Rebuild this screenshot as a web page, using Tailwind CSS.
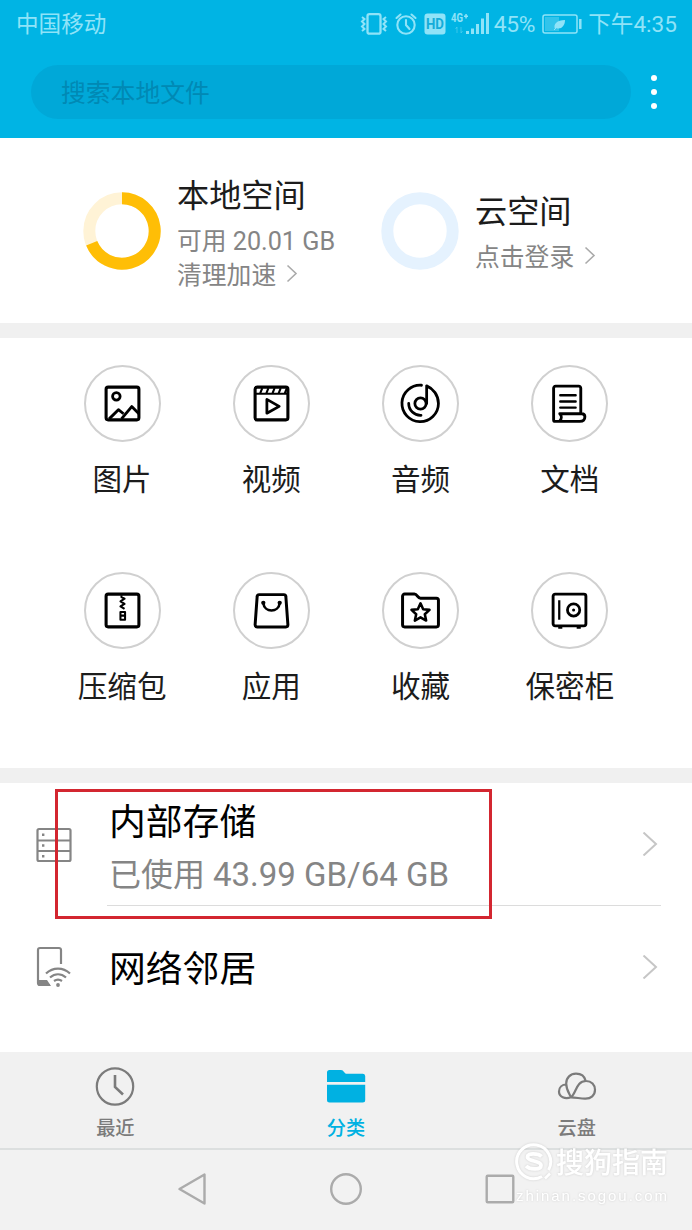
<!DOCTYPE html>
<html lang="zh-CN">
<head>
<meta charset="utf-8">
<title>文件管理</title>
<script src="https://cdn.jsdelivr.net/npm/@tailwindcss/browser@4"></script>
</head>
<body class="bg-white">
<div class="relative flex h-[1230px] w-[692px] flex-col overflow-hidden bg-white font-['Roboto','Noto_Sans_CJK_SC',sans-serif] text-[#1c1c1c]">

  <header class="h-[138px] bg-[#00b4e4]">
    <div class="flex h-12 items-center justify-between pl-4 pr-[15px] text-[22.6px] leading-none text-[#8fe3f8]">
      <span class="pt-[3px]">中国移动</span>
      <div class="flex items-center">
        <svg class="mr-[7px] h-6 w-[28px]" viewBox="0 0 28 24" fill="none" stroke="currentColor" stroke-width="2.300"><rect x="7.500" y="2.200" width="13" height="19.500" rx="2"/><path d="M2 5l2.500 2-2.500 2.500 2.500 2.500-2.500 2.500 2.500 2.500-2.500 2M26 5l-2.500 2 2.500 2.500-2.500 2.500 2.500 2.500-2.500 2.500 2.500 2" stroke-width="2"/></svg>
        <svg class="mr-[7px] h-6 w-[22px]" viewBox="0 0 22 24" fill="none" stroke="currentColor" stroke-width="2.100" stroke-linecap="round"><circle cx="11" cy="13" r="8.700"/><path d="M11 8v5l3.500 4M1.500 6L5.500 2.500M20.500 6l-4-3.500"/></svg>
        <svg class="mr-[5px] h-6 w-[22px]" viewBox="0 0 22 24"><rect x="0.500" y="1.500" width="21" height="21" rx="3" fill="currentColor"/><text x="11" y="17.300" text-anchor="middle" textLength="18" lengthAdjust="spacingAndGlyphs" font-size="14.500" font-weight="700" fill="#14acd9">HD</text></svg>
        <svg class="mr-[5px] h-6 w-[38px]" viewBox="0 0 38 24" fill="currentColor"><text x="0" y="10" font-size="12" font-weight="700" textLength="12" lengthAdjust="spacingAndGlyphs">4G</text><path d="M13 3.500h4v1.500h-4zM14.300 2h1.500v4.500h-1.500z"/><path d="M6 15v6M4.500 17L6 15M10 15v6M11.500 19L10 21" stroke="currentColor" stroke-opacity=".4"/><path d="M15 19h3v3h-3zM20 16.500h3V22h-3zM25 12h3v10h-3zM30 6.500h3V22h-3zM35 1h3v21h-3z"/></svg>
        <span class="mr-[7px] pt-[2px] text-[22.8px] tracking-[-0.3px]">45%</span>
        <svg class="mr-[6px] h-6 w-[40px]" viewBox="0 0 40 24" fill="none" stroke="currentColor"><rect x="1" y="3" width="34" height="18" rx="2" stroke-width="1.500"/><rect x="3" y="5" width="14" height="14" fill="currentColor" fill-opacity=".35" stroke="none"/><path d="M13 17c-2-5 2-9 10-9 0 6-4 10-9 8z" fill="currentColor" stroke="none"/><path d="M12 18l6-6" /><path d="M38.300 7v10" stroke-width="2.500"/></svg>
        <span class="pt-[3px]">下午4:35</span>
      </div>
    </div>
    <div class="flex pl-[31px] pt-[17px]">
      <div class="flex h-[54px] w-[600px] items-center rounded-full bg-[#00a8d8] pl-[30px] pt-1 text-[24.8px] leading-none text-[#0089b4]">搜索本地文件</div>
      <div class="ml-[19.500px] flex flex-col justify-center gap-2">
        <i class="size-[6px] rounded-full bg-white"></i>
        <i class="size-[6px] rounded-full bg-white"></i>
        <i class="size-[6px] rounded-full bg-white"></i>
      </div>
    </div>
  </header>

  <section class="flex h-[185px] pl-[83px]">
    <div class="flex w-[298px] items-center">
      <svg class="size-[78px]" viewBox="0 0 78 78" fill="none" stroke-width="12"><circle cx="39" cy="39" r="32.700" stroke="#fff3d6"/><path d="M39 6.300A32.700 32.700 0 1 1 8.700 51.300" stroke="#ffbe06"/></svg>
      <div class="ml-4 flex flex-col pt-[5px]">
        <h2 class="text-[32.2px] leading-[44px]">本地空间</h2>
        <p class="mt-[7px] text-[24.8px] leading-[34px] text-[#858585]">可用 <span class="text-[25.2px]">20.01 GB</span></p>
        <p class="flex items-center text-[24.8px] leading-[34px] text-[#858585]">清理加速<svg class="ml-[10px] h-5 w-3 -translate-y-[2px]" viewBox="0 0 12 20" fill="none" stroke="#aaa" stroke-width="1.600"><path d="M1.500 1.500l8.500 8-8.500 8"/></svg></p>
      </div>
    </div>
    <div class="flex items-center">
      <svg class="size-[78px]" viewBox="0 0 78 78" fill="none"><circle cx="39" cy="39" r="32.700" stroke="#e5f2fe" stroke-width="12"/></svg>
      <div class="ml-4 flex flex-col pt-1">
        <h2 class="text-[32.2px] leading-[44px]">云空间</h2>
        <p class="mt-[7px] flex items-center text-[24.8px] leading-[34px] text-[#858585]">点击登录<svg class="ml-[10px] h-5 w-3 -translate-y-[2px]" viewBox="0 0 12 20" fill="none" stroke="#aaa" stroke-width="1.600"><path d="M1.500 1.500l8.500 8-8.500 8"/></svg></p>
      </div>
    </div>
  </section>

  <div class="h-[15px] bg-[#f0f0f0]"></div>

  <section class="grid h-[430px] grid-cols-4 grid-rows-[207px_207px] px-[47.5px] pt-[27px] text-[29.6px] leading-[40px]">
    <div class="flex flex-col items-center whitespace-nowrap">
      <div class="flex size-[77px] items-center justify-center rounded-full border-2 border-[#d0d0d0]">
        <svg class="size-[41px]" viewBox="0 0 40 40" fill="none" stroke="#000" stroke-width="3" stroke-linejoin="round"><rect x="4" y="4" width="32" height="32" rx="2"/><circle cx="14" cy="13" r="3.700" stroke-width="2.700"/><path d="M7 35l9-9 5 4M19 35l10-12 7 7" stroke-width="2.800"/></svg>
      </div>
      <span class="mt-[18px]">图片</span>
    </div>
    <div class="flex flex-col items-center whitespace-nowrap">
      <div class="flex size-[77px] items-center justify-center rounded-full border-2 border-[#d0d0d0]">
        <svg class="size-[41px]" viewBox="0 0 40 40" fill="none" stroke="#000" stroke-width="3" stroke-linejoin="round"><rect x="4" y="4" width="32" height="32" rx="2"/><path d="M4 10.500h32" stroke-width="2"/><path d="M9 10l2-5M15 10l2-5M21 10l2-5M27 10l2-5M33 10l2-5" stroke-width="2"/><path d="M15.500 16v13.500l12-6.700z" stroke-width="2.700"/></svg>
      </div>
      <span class="mt-[18px]">视频</span>
    </div>
    <div class="flex flex-col items-center whitespace-nowrap">
      <div class="flex size-[77px] items-center justify-center rounded-full border-2 border-[#d0d0d0]">
        <svg class="size-[41px]" viewBox="0 0 40 40" fill="none" stroke="#000" stroke-width="2.700" stroke-linecap="round" stroke-linejoin="round"><path d="M21 2.200A17.800 17.800 0 1 0 37.500 20C37.500 12 32.500 5.500 26 2.800V20"/><circle cx="20" cy="20" r="5.500"/><path d="M8.500 20A11.500 11.500 0 0 0 20.500 31.500"/></svg>
      </div>
      <span class="mt-[18px]">音频</span>
    </div>
    <div class="flex flex-col items-center whitespace-nowrap">
      <div class="flex size-[77px] items-center justify-center rounded-full border-2 border-[#d0d0d0]">
        <svg class="size-[41px]" viewBox="0 0 40 40" fill="none" stroke="#000" stroke-width="2.800" stroke-linecap="round" stroke-linejoin="round"><path d="M31 29V5a2 2 0 0 0-2-2H6.500a2 2 0 0 0-2 2v31a1.500 1.500 0 0 0 1.500 1.500H30c3.500 0 5-2 5-4.500s-1-3-3-3H10.500c2 2 2 5 0 7"/><path d="M11 12h15M11 18h15M11 24h15" stroke-width="2.300"/></svg>
      </div>
      <span class="mt-[18px]">文档</span>
    </div>
    <div class="flex flex-col items-center whitespace-nowrap">
      <div class="flex size-[77px] items-center justify-center rounded-full border-2 border-[#d0d0d0]">
        <svg class="size-[41px]" viewBox="0 0 40 40" fill="none" stroke="#000" stroke-width="3" stroke-linejoin="round"><rect x="4" y="4" width="32" height="32" rx="2"/><path d="M19 5v2l3 1.500-4 2.500 4 2.500-4 2.500 4 2.500M18 21.500h4.500v7.500H18zM18 25h4" stroke-width="2"/></svg>
      </div>
      <span class="mt-[18px]">压缩包</span>
    </div>
    <div class="flex flex-col items-center whitespace-nowrap">
      <div class="flex size-[77px] items-center justify-center rounded-full border-2 border-[#d0d0d0]">
        <svg class="size-[41px]" viewBox="0 0 40 40" fill="none" stroke="#000" stroke-width="2.900" stroke-linejoin="round"><path d="M8 4.500h24a2 2 0 0 1 2 2l2 27.500a2 2 0 0 1-2 2H6a2 2 0 0 1-2-2L6 6.500a2 2 0 0 1 2-2z"/><path d="M12 12.500c1 10 15 10 16 0" stroke-width="2.600"/><circle cx="12" cy="12.500" r="2.100" fill="#000" stroke="none"/><circle cx="28" cy="12.500" r="2.100" fill="#000" stroke="none"/></svg>
      </div>
      <span class="mt-[18px]">应用</span>
    </div>
    <div class="flex flex-col items-center whitespace-nowrap">
      <div class="flex size-[77px] items-center justify-center rounded-full border-2 border-[#d0d0d0]">
        <svg class="size-[41px]" viewBox="0 0 40 40" fill="none" stroke="#000" stroke-width="2.900" stroke-linejoin="round"><path d="M4.500 4H14c3 0 3 4 6 4h15.500a2 2 0 0 1 2 2v24a2 2 0 0 1-2 2h-31a2 2 0 0 1-2-2V6a2 2 0 0 1 2-2z"/><path d="M20 13l2.600 5.700 6.200.7-4.600 4.200 1.300 6.200-5.500-3.100-5.500 3.100 1.300-6.200-4.600-4.200 6.200-.7z" stroke-width="2.500"/></svg>
      </div>
      <span class="mt-[18px]">收藏</span>
    </div>
    <div class="flex flex-col items-center whitespace-nowrap">
      <div class="flex size-[77px] items-center justify-center rounded-full border-2 border-[#d0d0d0]">
        <svg class="size-[41px]" viewBox="0 0 40 40" fill="none" stroke="#000" stroke-width="2.800" stroke-linejoin="round"><rect x="4" y="4" width="32" height="31" rx="2"/><path d="M10 10v19" stroke-width="2.200"/><circle cx="24" cy="19.500" r="6" stroke-width="2.700"/><circle cx="24" cy="19.500" r="1.500" fill="#000" stroke="none"/><path d="M9 36.500h4M27 36.500h4" /></svg>
      </div>
      <span class="mt-[18px]">保密柜</span>
    </div>
  </section>

  <div class="h-[15px] bg-[#f0f0f0]"></div>

  <section class="h-[269px] pl-[34px] pr-[31px] text-black">
    <div class="flex h-[123px]">
      <div class="flex w-[73px] items-center">
        <svg class="size-10" viewBox="0 0 40 40" fill="none" stroke="#858585" stroke-width="2.200"><rect x="3.500" y="4" width="33" height="32" rx="1.500"/><path d="M3 15.500h34M3 26h34"/><path d="M8 9.800h2.400M8 20.500h2.400M8 31.300h2.400" stroke-width="2.400"/></svg>
      </div>
      <div class="flex grow justify-between border-b border-[#dcdcdc] pl-[2px]">
        <div class="flex flex-col">
          <h3 class="mt-[15px] text-[36.8px] leading-[50px]">内部存储</h3>
          <p class="mt-[2px] text-[32px] leading-[50px] text-[#858585]">已使用 <span class="text-[33px]">43.99 GB/64 GB</span></p>
        </div>
        <svg class="mr-[3px] h-6 w-4 self-center" viewBox="0 0 16 24" fill="none" stroke="#c6c6c6" stroke-width="2"><path d="M1.500 .5L14 12 1.500 23.500"/></svg>
      </div>
    </div>
    <div class="flex h-[122px] items-center">
      <div class="flex w-[75px] items-center">
        <svg class="h-[42px] w-10" viewBox="0 0 40 42" fill="none" stroke="#858585" stroke-width="2.200"><path d="M27 18V4a2 2 0 0 0-2-2H6a2 2 0 0 0-2 2v33a2 2 0 0 0 2 2h10"/><path d="M4 34h9l4 6H6a2 2 0 0 1-2-2z" fill="#858585" stroke="none"/><path d="M12 27.500c7-6.500 17-6.500 24 0M16 31.500c5-4.300 11-4.300 16 0M20 35c3-2 5-2 8 0"/><circle cx="24" cy="39" r="1.900" fill="#858585" stroke="none"/></svg>
      </div>
      <h3 class="grow pt-[5px] text-[36.8px] leading-[50px]">网络邻居</h3>
      <svg class="mr-[3px] h-6 w-4" viewBox="0 0 16 24" fill="none" stroke="#c6c6c6" stroke-width="2"><path d="M1.500 .5L14 12 1.500 23.500"/></svg>
    </div>
  </section>

  <nav class="grid h-[98px] grid-cols-3 border-b-2 border-[#dcdfdf] bg-[#f1f1f1] pt-[14px] text-[19.2px] font-medium leading-[26px] text-[#7b7b7b]">
    <div class="flex flex-col items-center">
      <svg class="size-10" viewBox="0 0 40 40" fill="none" stroke="currentColor" stroke-width="2.200"><circle cx="20" cy="20.500" r="18.200"/><path d="M20 9v12l8 7.500" stroke-width="2.600"/></svg>
      <span class="mt-[10px]">最近</span>
    </div>
    <div class="flex flex-col items-center text-[#00b1e2]">
      <svg class="size-10" viewBox="0 0 40 40" fill="currentColor"><path d="M1 16V6.500a2.500 2.500 0 0 1 2.500-2.500H15c3 0 3 3.800 6 3.800h15.700A2.500 2.500 0 0 1 39.200 10v6zM1 18.700h38.200V34a2.500 2.500 0 0 1-2.500 2.500H3.500A2.500 2.500 0 0 1 1 34z"/></svg>
      <span class="mt-[10px]">分类</span>
    </div>
    <div class="flex flex-col items-center">
      <svg class="size-10" viewBox="0 0 40 40" fill="none" stroke="currentColor" stroke-width="2.200" stroke-linejoin="round"><path d="M14 31.300C12 27 9.200 24 9.200 17.500 9.200 11.500 13.500 7.700 19 7.700c5 0 8.700 3 9.700 7.300M14 31.300C19.500 27 19 15 29 15c5.500 0 9 3.800 9 8.800 0 5.500-4 9-10 8.800C23.500 32.500 19 31.500 14 31.300zM9.500 18.500C5 18.500 2 21.500 2 25.500c0 5.500 6 8 12 5.800"/></svg>
      <span class="mt-[10px]">云盘</span>
    </div>
  </nav>

  <footer class="flex h-[80px] items-center bg-[#f2f2f2] pb-[2px] pl-[176px]">
    <svg class="h-9 w-8" viewBox="0 0 32 36" fill="none" stroke="#ababab" stroke-width="2.400" stroke-linejoin="round"><path d="M28.500 3.500v29L3.500 18z"/></svg>
    <svg class="ml-[120px] size-9" viewBox="0 0 36 36" fill="none" stroke="#ababab" stroke-width="2.400"><circle cx="18" cy="18" r="14.800"/></svg>
    <svg class="ml-[118px] size-9" viewBox="0 0 36 36" fill="none" stroke="#ababab" stroke-width="2.400"><rect x="4.700" y="4.700" width="26.600" height="26.600" rx="1"/></svg>
  </footer>

  <div class="absolute left-[55px] top-[789px] h-[130px] w-[437px] border-[3px] border-[#d32630]"></div>

  <div class="absolute left-[514px] top-[1142px] text-white [filter:drop-shadow(0_0_1px_rgba(0,0,0,.14))]">
    <div class="flex h-10 items-center">
      <svg class="size-10" viewBox="0 0 40 40" fill="none" stroke="currentColor" stroke-width="3"><path d="M28 34.500A17 17 0 1 1 34.500 28"/><path d="M27.500 14.500c-3-3-14-4-14 .5s13.500 3.500 13.500 8.500c0 4.500-11 4.500-15 .5" stroke-width="3.800"/><path d="M31 36.500l5-5" stroke-width="2.500"/></svg>
      <span class="ml-[2px] pt-1 text-[28px] font-medium leading-10">搜狗指南</span>
    </div>
    <div class="ml-[2px] mt-px text-[15px] leading-[26px] tracking-[1.95px] whitespace-nowrap font-['Liberation_Sans',sans-serif]">zhinan.sogou.com</div>
  </div>
</div>
</body>
</html>
